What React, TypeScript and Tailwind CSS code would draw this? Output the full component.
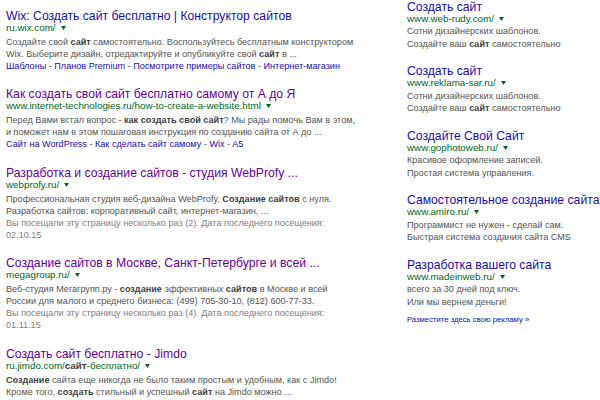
import React from "react";

type Seg = string | { b: string };

const renderSegs = (segs: Seg[]) =>
  segs.map((s, i) =>
    typeof s === "string" ? (
      <span key={i}>{s}</span>
    ) : (
      <b key={i} className="font-bold text-[#3f3f3f]">
        {s.b}
      </b>
    )
  );

function Arrow() {
  return (
    <span className="ml-[5px] inline-block align-middle">
      <svg width="5" height="4" viewBox="0 0 5 4" className="block">
        <path d="M0 0 L5 0 L2.5 4 Z" fill="#006621" />
      </svg>
    </span>
  );
}

type Result = {
  title: string;
  visited: boolean;
  url: Seg[];
  lines: Seg[][];
  meta?: string[];
  sitelinks?: string[];
};

const results: Result[] = [
  {
    title: "Wix: Создать сайт бесплатно | Конструктор сайтов",
    visited: false,
    url: ["ru.wix.com/"],
    lines: [
      ["Создайте свой ", { b: "сайт" }, " самостоятельно. Воспользуйтесь бесплатным конструктором"],
      ["Wix. Выберите дизайн, отредактируйте и опубликуйте свой ", { b: "сайт" }, " в ..."],
    ],
    sitelinks: ["Шаблоны", "Планов Premium", "Посмотрите примеры сайтов", "Интернет-магазин"],
  },
  {
    title: "Как создать свой сайт бесплатно самому от А до Я",
    visited: true,
    url: ["www.internet-technologies.ru/how-to-create-a-website.html"],
    lines: [
      ["Перед Вами встал вопрос - ", { b: "как создать свой сайт" }, "? Мы рады помочь Вам в этом,"],
      ["и поможет нам в этом пошаговая инструкция по созданию сайта от А до ..."],
    ],
    sitelinks: ["Сайт на WordPress", "Как сделать сайт самому", "Wix", "A5"],
  },
  {
    title: "Разработка и создание сайтов - студия WebProfy ...",
    visited: true,
    url: ["webprofy.ru/"],
    lines: [
      ["Профессиональная студия веб-дизайна WebProfy. ", { b: "Создание сайтов" }, " с нуля."],
      ["Разработка сайтов: корпоративный сайт, интернет-магазин, ..."],
    ],
    meta: ["Вы посещали эту страницу несколько раз (2). Дата последнего посещения:", "02.10.15"],
  },
  {
    title: "Создание сайтов в Москве, Санкт-Петербурге и всей ...",
    visited: true,
    url: ["megagroup.ru/"],
    lines: [
      ["Веб-студия Мегагрупп.ру - ", { b: "создание" }, " эффективных ", { b: "сайтов" }, " в Москве и всей"],
      ["России для малого и среднего бизнеса: (499) 705-30-10, (812) 600-77-33."],
    ],
    meta: ["Вы посещали эту страницу несколько раз (4). Дата последнего посещения:", "01.11.15"],
  },
  {
    title: "Создать сайт бесплатно - Jimdo",
    visited: true,
    url: ["ru.jimdo.com/", { b: "сайт" }, "-бесплатно/"],
    lines: [
      [{ b: "Создание" }, " сайта еще никогда не было таким простым и удобным, как с Jimdo!"],
      ["Кроме того, ", { b: "создать" }, " стильный и успешный ", { b: "сайт" }, " на Jimdo можно ..."],
    ],
  },
];

type Ad = { title: string; url: string; lines: Seg[][] };

const ads: Ad[] = [
  {
    title: "Создать сайт",
    url: "www.web-rudy.com/",
    lines: [["Сотни дизайнерских шаблонов."], ["Создайте ваш ", { b: "сайт" }, " самостоятельно"]],
  },
  {
    title: "Создать сайт",
    url: "www.reklama-sar.ru/",
    lines: [["Сотни дизайнерских шаблонов."], ["Создайте ваш ", { b: "сайт" }, " самостоятельно"]],
  },
  {
    title: "Создайте Свой Сайт",
    url: "www.gophotoweb.ru/",
    lines: [["Красивое оформление записей."], ["Простая система управления."]],
  },
  {
    title: "Самостоятельное создание сайта",
    url: "www.amiro.ru/",
    lines: [["Программист не нужен - сделай сам."], ["Быстрая система создания сайта CMS"]],
  },
  {
    title: "Разработка вашего сайта",
    url: "www.madeinweb.ru/",
    lines: [["всего за 30 дней под ключ."], ["Или мы вернем деньги!"]],
  },
];

export default function App() {
  return (
    <div
      className="w-[600px] h-[400px] overflow-hidden bg-white flex"
      style={{ fontFamily: '"Liberation Sans", Arial, sans-serif' }}
    >
      <div className="w-[400px] shrink-0 pl-[6px] pt-[9.5px] flex flex-col gap-[16.5px]">
        {results.map((r, i) => (
          <div key={i} className="flex flex-col whitespace-nowrap">
            <div
              className={`text-[12.2px] leading-[12px] ${
                r.visited ? "text-[#660099]" : "text-[#1a0dab]"
              }`}
            >
              {r.title}
            </div>
            <div className="text-[9.8px] leading-[12px] text-[#006621] flex items-center">
              <span>{renderSegs(r.url)}</span>
              <Arrow />
            </div>
            <div className="mt-[2px] text-[9.1px] leading-[12px] text-[#545454]">
              {r.lines.map((l, j) => (
                <div key={j}>{renderSegs(l)}</div>
              ))}
              {r.meta &&
                r.meta.map((m, j) => (
                  <div key={"m" + j} className="text-[#808080]">
                    {m}
                  </div>
                ))}
              {r.sitelinks && (
                <div className="text-[#1a0dab]">
                  {r.sitelinks.map((s, j) => (
                    <span key={j}>
                      {j > 0 && <span className="text-[#545454]"> - </span>}
                      {s}
                    </span>
                  ))}
                </div>
              )}
            </div>
          </div>
        ))}
      </div>
      <div className="flex-1 min-w-0 pl-[7px] pt-[0.5px] flex flex-col whitespace-nowrap">
        <div className="flex flex-col gap-[15px]">
          {ads.map((a, i) => (
            <div key={i} className="flex flex-col">
              <div className="text-[12.2px] leading-[12px] text-[#1a0dab]">{a.title}</div>
              <div className="text-[9.8px] leading-[12.5px] text-[#006621] flex items-center">
                <span>{a.url}</span>
                <Arrow />
              </div>
              <div className="text-[9.1px] leading-[12.5px] text-[#545454]">
                {a.lines.map((l, j) => (
                  <div key={j}>{renderSegs(l)}</div>
                ))}
              </div>
            </div>
          ))}
        </div>
        <div className="mt-[7px] text-[7.7px] leading-[10px] text-[#1a0dab]">
          Разместите здесь свою рекламу »
        </div>
      </div>
    </div>
  );
}
